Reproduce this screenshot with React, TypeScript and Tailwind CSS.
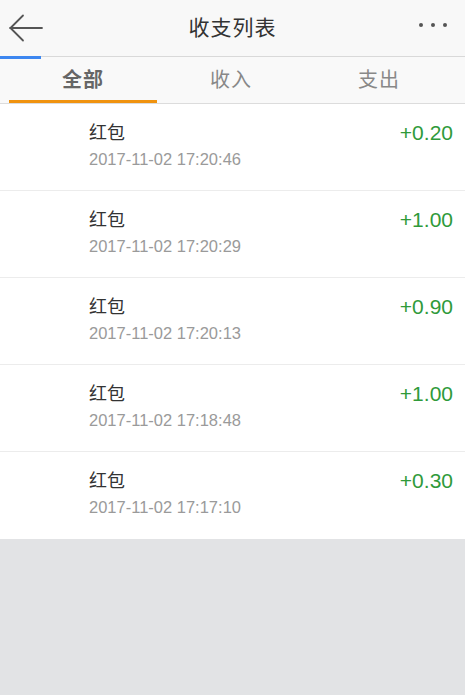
import { useState } from "react";

const records = [
  { title: "红包", time: "2017-11-02 17:20:46", amount: "+0.20" },
  { title: "红包", time: "2017-11-02 17:20:29", amount: "+1.00" },
  { title: "红包", time: "2017-11-02 17:20:13", amount: "+0.90" },
  { title: "红包", time: "2017-11-02 17:18:48", amount: "+1.00" },
  { title: "红包", time: "2017-11-02 17:17:10", amount: "+0.30" },
];

const tabs = ["全部", "收入", "支出"];

export default function App() {
  const [active, setActive] = useState(0);

  return (
    <div
      className="min-h-screen bg-[#e2e3e5] flex flex-col"
      style={{ fontFamily: '"Liberation Sans", "Noto Sans CJK SC", sans-serif' }}
    >
      {/* Header */}
      <div className="h-[56px] bg-[#f8f8f8] flex items-center justify-between">
        <button className="w-[56px] h-full flex items-center pl-[9px]">
          <svg width="34" height="28" viewBox="0 0 34 28" fill="none">
            <path d="M1 14 H33 M14 1.5 L1.5 14 L14 26.5" stroke="#555" strokeWidth="1.8" strokeLinecap="round" strokeLinejoin="round" />
          </svg>
        </button>
        <h1 className="text-[21px] text-[#333] tracking-[1px]">收支列表</h1>
        <div className="w-[56px] h-full flex items-center justify-end gap-[8px] pr-[18px] pb-[7px]">
          <span className="w-[4px] h-[4px] rounded-full bg-[#555]" />
          <span className="w-[4px] h-[4px] rounded-full bg-[#555]" />
          <span className="w-[4px] h-[4px] rounded-full bg-[#555]" />
        </div>
      </div>

      {/* Loading bar */}
      <div className="h-[3px] bg-[#f9f9f9] flex">
        <div className="w-[41px] h-[3px] bg-[#3d87f0]" />
        <div className="flex-1 h-px bg-[#d9d9d9]" />
      </div>

      {/* Tabs */}
      <div className="h-[45px] bg-[#f9f9f9] border-b border-[#dcdcdc] flex pl-[9px]">
        {tabs.map((t, i) => (
          <button
            key={t}
            onClick={() => setActive(i)}
            className={
              "w-[148px] h-full flex items-center justify-center text-[20px] border-b-[3px] -mb-px tracking-[1px] " +
              (active === i ? "border-[#f0930f] text-[#666] font-bold" : "border-transparent text-[#888]")
            }
          >
            {t}
          </button>
        ))}
      </div>

      {/* List */}
      <div className="bg-white">
        {records.map((r, i) => (
          <div
            key={i}
            className={
              "h-[87px] flex justify-between pl-[89px] pr-[12px] pt-[15px] " +
              (i < records.length - 1 ? "border-b border-[#ececec]" : "")
            }
          >
            <div className="flex flex-col">
              <span className="text-[18px] text-[#333] leading-[28px]">{r.title}</span>
              <span className="text-[16.5px] text-[#9a9a9a] leading-[22px] mt-[1px]">{r.time}</span>
            </div>
            <span className="text-[21px] text-[#2f9a3a] leading-[28px]">{r.amount}</span>
          </div>
        ))}
      </div>
    </div>
  );
}
